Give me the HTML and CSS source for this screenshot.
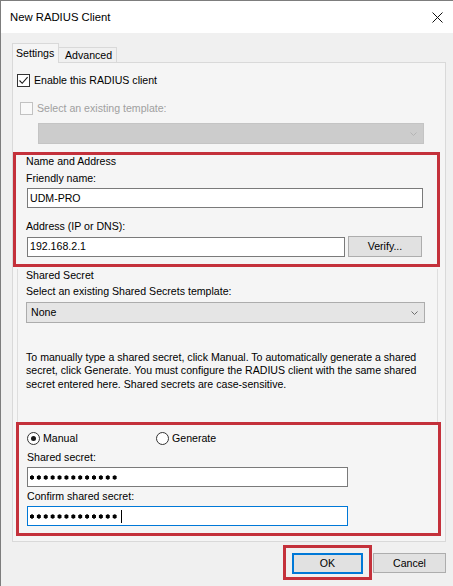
FILE: index.html
```html
<!DOCTYPE html>
<html lang="en">
<head>
    <meta charset="UTF-8">
    <meta name="viewport" content="width=device-width, initial-scale=1.0">
    <title>New RADIUS Client</title>
    <link rel="stylesheet" href="styles.css">
</head>
<body>
    <div class="dialog">
        <div class="titlebar">
            <span class="title">New RADIUS Client</span>
            <svg class="close" viewBox="0 0 11 11"><path d="M0.5 0.5L10.5 10.5M10.5 0.5L0.5 10.5" stroke="#111" stroke-width="1" fill="none"/></svg>
        </div>

        <div class="content">
            <div class="tabs">
                <div class="tab tab-active">Settings</div>
                <div class="tab tab-other">Advanced</div>
            </div>

            <div class="page">
                <div class="check check-enable">
                    <span class="box"><svg viewBox="0 0 11 11"><path d="M1.5 5.5L4.2 8.3L9.6 2.2" stroke="#1a1a1a" stroke-width="1.1" fill="none"/></svg></span>
                    Enable this RADIUS client
                </div>
                <div class="check check-template">
                    <span class="box box-disabled"></span>
                    Select an existing template:
                </div>
                <div class="select select-disabled">
                    <span></span>
                    <svg class="chevron" viewBox="0 0 7 4"><path d="M0.5 0.5L3.5 3.5L6.5 0.5" stroke="#b4b4b4" fill="none"/></svg>
                </div>

                <div class="mark mark-name">
                    <div class="legend">Name and Address</div>
                    <div class="field-label label-friendly">Friendly name:</div>
                    <div class="textbox textbox-name">UDM-PRO</div>
                    <div class="field-label label-address">Address (IP or DNS):</div>
                    <div class="address-row">
                        <div class="textbox textbox-address">192.168.2.1</div>
                        <div class="button button-verify">Verify...</div>
                    </div>
                </div>

                <div class="group-secret">
                    <div class="legend legend-secret">Shared Secret</div>
                    <div class="field-label label-template">Select an existing Shared Secrets template:</div>
                    <div class="select select-none">
                        <span>None</span>
                        <svg class="chevron" viewBox="0 0 7 4"><path d="M0.5 0.5L3.5 3.5L6.5 0.5" stroke="#6d6d6d" fill="none"/></svg>
                    </div>
                    <p class="hint">To manually type a shared secret, click Manual. To automatically generate a shared<br>secret, click Generate. You must configure the RADIUS client with the same shared<br>secret entered here. Shared secrets are case-sensitive.</p>
                </div>

                <div class="mark mark-secret">
                    <div class="radios">
                        <div class="radio-option"><span class="radio radio-checked"></span>Manual</div>
                        <div class="radio-option"><span class="radio"></span>Generate</div>
                    </div>
                    <div class="field-label label-secret">Shared secret:</div>
                    <div class="textbox textbox-secret"><span class="dots"></span></div>
                    <div class="field-label label-confirm">Confirm shared secret:</div>
                    <div class="textbox textbox-secret textbox-focus"><span class="dots"></span><span class="caret"></span></div>
                </div>
            </div>

            <div class="actions">
                <div class="mark mark-ok">
                    <div class="button button-ok">OK</div>
                </div>
                <div class="button button-cancel">Cancel</div>
            </div>
        </div>
    </div>
</body>
</html>
```

FILE: styles.css
```css
* {
    box-sizing: border-box;
}

body {
    margin: 0;
    font-family: "Liberation Sans", Arial, sans-serif;
    font-size: 10.6px;
    line-height: 13px;
    color: #000;
    background: #f0f0f0;
}

.dialog {
    width: 453px;
    height: 586px;
    border-top: 1px solid #7d7d7d;
    border-left: 1px solid #7d7d7d;
    background: #f0f0f0;
    overflow: hidden;
}

.titlebar {
    height: 32px;
    background: #fff;
    display: flex;
    align-items: center;
    justify-content: space-between;
    padding: 0 10px 0 9px;
}

.title {
    font-size: 11.3px;
}

.close {
    width: 11px;
    height: 11px;
}

.content {
    padding: 10px 7px 0 11px;
}

/* tabs */
.tabs {
    display: flex;
    align-items: flex-end;
    height: 20px;
    margin-bottom: -1px;
    position: relative;
    z-index: 1;
}

.tab {
    border: 1px solid #d9d9d9;
    border-bottom: none;
}

.tab-active {
    width: 47px;
    height: 20px;
    padding: 3px 0 0 3px;
    background: #f5f5f5;
}

.tab-other {
    width: 58px;
    height: 15px;
    margin-bottom: 1px;
    padding: 1px 0 0 6px;
    border-left: none;
    background: #f0f0f0;
}

.page {
    height: 480px;
    border: 1px solid #d9d9d9;
    background: #f5f5f5;
}

/* checkboxes */
.check {
    display: flex;
    align-items: center;
    gap: 4px;
    height: 13px;
}

.check-enable {
    margin: 11px 0 0 4px;
}

.check-template {
    margin: 15px 0 0 7px;
    color: #a0a0a0;
}

.box {
    width: 13px;
    height: 13px;
    border: 1px solid #333;
    background: #fff;
    display: flex;
}

.box svg {
    width: 11px;
    height: 11px;
}

.box-disabled {
    border-color: #c2c2c2;
    background: #f9f9f9;
}

/* dropdowns */
.select {
    height: 21px;
    display: flex;
    align-items: center;
    justify-content: space-between;
    padding: 0 6px 0 4px;
    border: 1px solid #acacac;
    background: #e5e5e5;
}

.select-disabled {
    width: 386px;
    margin: 8px 0 0 25px;
    border-color: #c4c4c4;
    background: #cccccc;
}

.select-none {
    width: 399px;
    margin-top: 4px;
}

.chevron {
    width: 7px;
    height: 4px;
}

/* red annotation frames */
.mark {
    border: 3px solid #c4313b;
}

.mark-name {
    width: 427px;
    height: 115px;
    margin-top: 8px;
    padding-left: 10px;
}

.mark-secret {
    width: 425px;
    height: 114px;
    margin-left: 3px;
    padding-left: 8px;
}

.field-label {
    height: 13px;
}

.label-friendly {
    margin-top: 4px;
}

.label-address {
    margin-top: 12px;
}

.textbox {
    height: 20px;
    display: flex;
    align-items: center;
    padding: 0 2px;
    border: 1px solid #7a7a7a;
    background: #fff;
}

.textbox-name {
    width: 396px;
    margin: 3px 0 0 1px;
}

.address-row {
    display: flex;
    align-items: center;
    margin: 3px 0 0 1px;
}

.textbox-address {
    width: 318px;
}

.button {
    display: flex;
    align-items: center;
    justify-content: center;
    border: 1px solid #adadad;
    background: #e1e1e1;
}

.button-verify {
    width: 74px;
    height: 21px;
    margin-left: 3px;
}

/* shared secret group */
.group-secret {
    width: 421px;
    height: 153px;
    margin-left: 4px;
    padding-left: 8px;
    border-left: 1px solid #dedede;
    border-right: 1px solid #dedede;
}

.legend-secret {
    margin-top: 2px;
}

.label-template {
    margin-top: 3px;
}

.hint {
    margin: 28px 0 0;
    line-height: 13.4px;
    white-space: nowrap;
}

/* manual / generate */
.radios {
    display: flex;
    height: 13px;
    margin-top: 7px;
}

.radio-option {
    width: 129px;
    display: flex;
    align-items: center;
    gap: 3px;
}

.radio {
    width: 13px;
    height: 13px;
    border: 1px solid #333;
    border-radius: 50%;
    background: #fff;
    display: flex;
    align-items: center;
    justify-content: center;
}

.radio-checked::after {
    content: "";
    width: 5px;
    height: 5px;
    border-radius: 50%;
    background: #1a1a1a;
}

.label-secret {
    margin-top: 6px;
}

.label-confirm {
    margin-top: 3px;
}

.textbox-secret {
    width: 321px;
    margin-top: 3px;
}

.textbox-focus {
    border-color: #0078d7;
}

.dots {
    width: 87px;
    height: 5px;
    background: radial-gradient(circle at 2px 2.5px, #000 1.9px, transparent 2.4px) 0 0 / 6.9px 5px repeat-x;
}

.caret {
    width: 1px;
    height: 13px;
    margin-left: 4px;
    background: #000;
}

/* dialog buttons */
.actions {
    display: flex;
    justify-content: flex-end;
    align-items: flex-start;
    margin-top: 3px;
}

.mark-ok {
    width: 89px;
    height: 35px;
    padding: 5px 0 0 6px;
}

.button-ok {
    width: 71px;
    height: 21px;
    border: 2px solid #0078d7;
}

.button-cancel {
    width: 73px;
    height: 20px;
    margin: 8px 0 0 1px;
}
```
